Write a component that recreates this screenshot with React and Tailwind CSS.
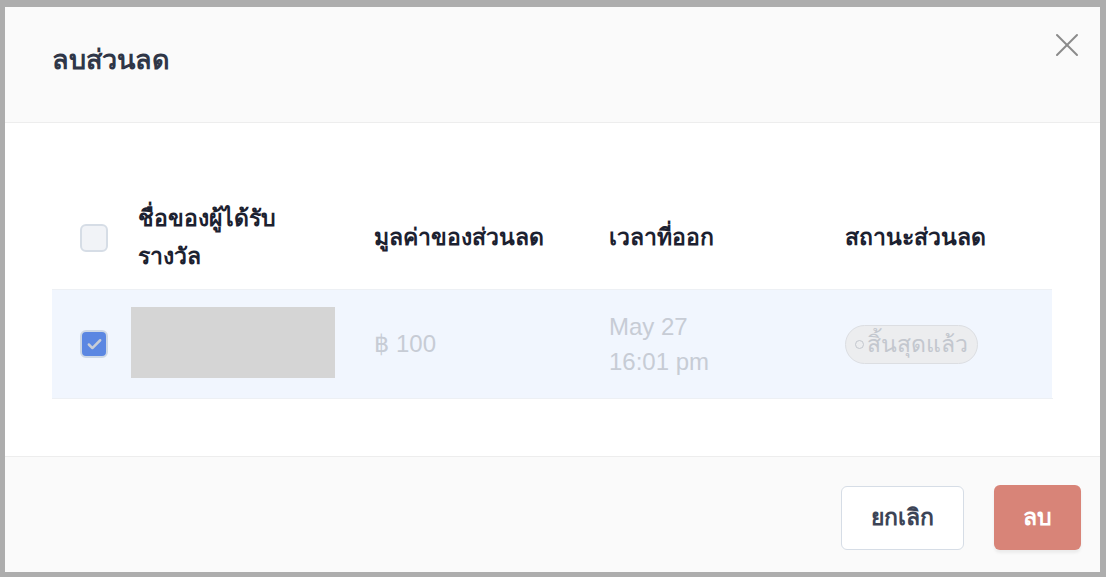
import { X, Check } from 'lucide-react';

const font = { fontFamily: '"Liberation Sans", "Noto Sans", "DejaVu Sans", sans-serif' };

const DeleteDiscountModal = () => {
  return (
    <div className="w-[1106px] h-[577px] bg-[#adadad] pt-[7px] pl-[5px]" style={font}>
      <div className="w-[1095px] h-[565px] bg-white flex flex-col">
        {/* Header */}
        <div className="h-[116px] bg-[#fafafa] border-b border-[#ededed] flex items-center justify-between pl-[47px] pr-[13px] shrink-0">
          <h2 className="text-[27px] font-semibold text-[#2f3647] -mt-[9px]">ลบส่วนลด</h2>
          <button className="text-[#8a8a8a] -mt-[40px]">
            <X size={40} strokeWidth={1.2} />
          </button>
        </div>

        {/* Body */}
        <div className="flex-1 px-[47px] pt-[63px]">
          <div className="grid grid-cols-[79px_235px_235px_236px_215px] border-b border-[#edf0f4]">
            {/* header row */}
            <div className="h-[104px] flex items-center pl-[28px] border-b border-[#edf0f4]">
              <span className="w-[28px] h-[28px] rounded-[6px] border-2 border-[#d6dde6] bg-[#f1f3f7]"></span>
            </div>
            <div className="h-[104px] flex items-center pl-[7px] pb-[2px] border-b border-[#edf0f4] text-[23px] font-bold text-[#1c2130] leading-[38px]">
              ชื่อของผู้ได้รับ<br />รางวัล
            </div>
            <div className="h-[104px] flex items-center pl-[8px] border-b border-[#edf0f4] text-[23px] font-bold text-[#1c2130]">
              มูลค่าของส่วนลด
            </div>
            <div className="h-[104px] flex items-center pl-[8px] border-b border-[#edf0f4] text-[23px] font-bold text-[#1c2130]">
              เวลาที่ออก
            </div>
            <div className="h-[104px] flex items-center pl-[8px] border-b border-[#edf0f4] text-[23px] font-bold text-[#1c2130]">
              สถานะส่วนลด
            </div>

            {/* data row */}
            <div className="h-[108px] bg-[#f1f6fe] flex items-center pl-[28px]">
              <span className="w-[28px] h-[28px] rounded-[6px] border-2 border-[#cdd8e6] bg-[#5b87e2] flex items-center justify-center">
                <Check size={17} strokeWidth={3.5} className="text-[#c8cdd6]" />
              </span>
            </div>
            <div className="h-[108px] bg-[#f1f6fe] flex items-center">
              <div className="w-[204px] h-[71px] bg-[#d5d5d5] -mt-[3px]"></div>
            </div>
            <div className="h-[108px] bg-[#f1f6fe] flex items-center pl-[8px] text-[24px] text-[#c7ccd5]">
              ฿ 100
            </div>
            <div className="h-[108px] bg-[#f1f6fe] flex items-center pl-[8px] text-[24px] text-[#c7ccd5] leading-[35px]">
              May 27<br />16:01 pm
            </div>
            <div className="h-[108px] bg-[#f1f6fe] flex items-center pl-[8px]">
              <span className="h-[39px] pl-[9px] pr-[9px] rounded-full bg-[#ecedef] border border-[#dcdee2] flex items-center gap-[3px] text-[23px] text-[#c3c7ce]">
                <span className="w-[9px] h-[9px] rounded-full border border-[#c3c7ce]"></span>
                สิ้นสุดแล้ว
              </span>
            </div>
          </div>
        </div>

        {/* Footer */}
        <div className="h-[116px] bg-[#fafafa] border-t border-[#ededed] flex items-center justify-end gap-[30px] pr-[19px] shrink-0">
          <button className="w-[123px] h-[64px] rounded-[6px] border border-[#d6dde6] bg-white text-[23px] font-bold text-[#3c4456] mt-[6px]">
            ยกเลิก
          </button>
          <button className="w-[87px] h-[65px] rounded-[6px] bg-[#d88478] text-[23px] font-bold text-white shadow-[0_3px_3px_rgba(0,0,0,0.06)] mt-[6px]">
            ลบ
          </button>
        </div>
      </div>
    </div>
  );
};

export default function App() {
  return <DeleteDiscountModal />;
}
